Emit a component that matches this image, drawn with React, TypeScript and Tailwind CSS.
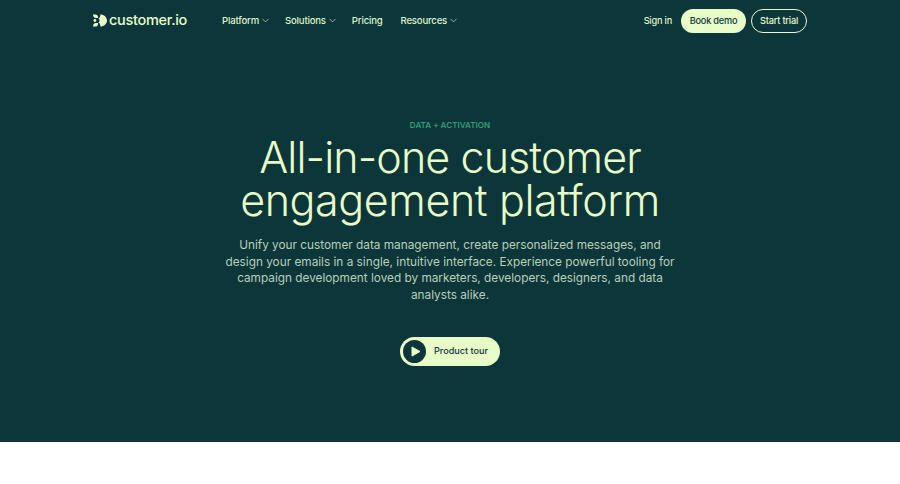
import React from "react";
import { ChevronDown } from "lucide-react";

const font = "font-['Inter','Liberation_Sans',sans-serif]";

const NavItem = ({ label, caret = true, className = "" }: { label: string; caret?: boolean; className?: string }) => (
  <a className={`flex items-center gap-[1px] text-[9.6px] font-medium tracking-[-0.2px] text-[#dff5c8] ${className}`}>
    {label}
    {caret && <ChevronDown className="h-[11px] w-[11px]" strokeWidth={1.4} />}
  </a>
);

const Logo = () => (
  <div className="flex items-center gap-[2px]">
    <svg width="14" height="13" viewBox="0 0 14 13" fill="#e8fcc8">
      <path d="M0 0.5h2.4c1.5 0 2.6 1.1 2.6 2.6v1h-2.2c-1.6 0-2.8-1.6-2.8-3.6z" />
      <path d="M0 12.5h2.4c1.5 0 2.6-1.1 2.6-2.6v-1h-2.2c-1.6 0-2.8 1.6-2.8 3.6z" />
      <circle cx="1.9" cy="6.5" r="1.4" />
      <path d="M7.4 0.5c3.6 0 6.6 2.7 6.6 6s-3 6-6.6 6c0-1.8-0.5-3.2-1.9-4.1 0.7-0.4 1.1-1.1 1.1-1.9s-0.4-1.5-1.1-1.9c1.4-0.9 1.9-2.3 1.9-4.1z" />
    </svg>
    <span className="text-[14.5px] font-medium leading-none tracking-[-0.3px] text-[#e8fcc8]">customer.io</span>
  </div>
);

export default function App() {
  return (
    <div className={`${font} min-h-[484px] bg-white`}>
      <div className="h-[442px] bg-[#0d363b]">
        <header className="flex h-[41px] items-center justify-between px-[93px]">
          <div className="flex items-center">
            <Logo />
            <nav className="ml-[35px] flex items-center gap-[14px] pt-[1px]">
              <NavItem label="Platform" />
              <NavItem label="Solutions" />
              <NavItem label="Pricing" caret={false} className="mr-[4px]" />
              <NavItem label="Resources" />
            </nav>
          </div>
          <div className="flex items-center text-[9.2px] font-medium tracking-[-0.2px]">
            <a className="mr-[9px] text-[#dff5c8]">Sign in</a>
            <a className="flex h-[24px] w-[65px] items-center justify-center rounded-full bg-[#e8fcc8] text-[#0d363b]">Book demo</a>
            <a className="ml-[5px] flex h-[24px] w-[56px] items-center justify-center rounded-full border border-[#e8fcc8] text-[#e8fcc8]">Start trial</a>
          </div>
        </header>

        <main className="flex flex-col items-center pt-[78px]">
          <p className="text-[8.1px] font-semibold leading-[12px] text-[#2f9e78]">DATA + ACTIVATION</p>
          <h1 className="mt-[5px] text-center text-[43px] font-light leading-[43px] tracking-[-0.4px] text-[#e8fcc8]">
            <span className="tracking-[-0.9px]">All-in-one customer</span>
            <br />
            engagement platform
          </h1>
          <p className="mt-[15px] w-[460px] text-center text-[11.8px] leading-[16.7px] text-[#b9cfb8]">
            Unify your customer data management, create personalized messages, and design your emails in a single, intuitive interface. Experience powerful tooling for campaign development loved by marketers, developers, designers, and data analysts alike.
          </p>
          <a className="mt-[33px] flex h-[29px] w-[100px] items-center rounded-full bg-[#e8fcc8] pl-[3px]">
            <span className="flex h-[23px] w-[23px] items-center justify-center rounded-full bg-[#0d363b]">
              <svg className="ml-[2px]" width="10" height="11" viewBox="0 0 10 11" fill="#e8fcc8" stroke="#e8fcc8" strokeLinejoin="round">
                <path d="M1 1l8 4.5-8 4.5z" />
              </svg>
            </span>
            <span className="ml-[8px] text-[9.1px] font-medium text-[#0d363b]">Product tour</span>
          </a>
        </main>
      </div>
    </div>
  );
}
